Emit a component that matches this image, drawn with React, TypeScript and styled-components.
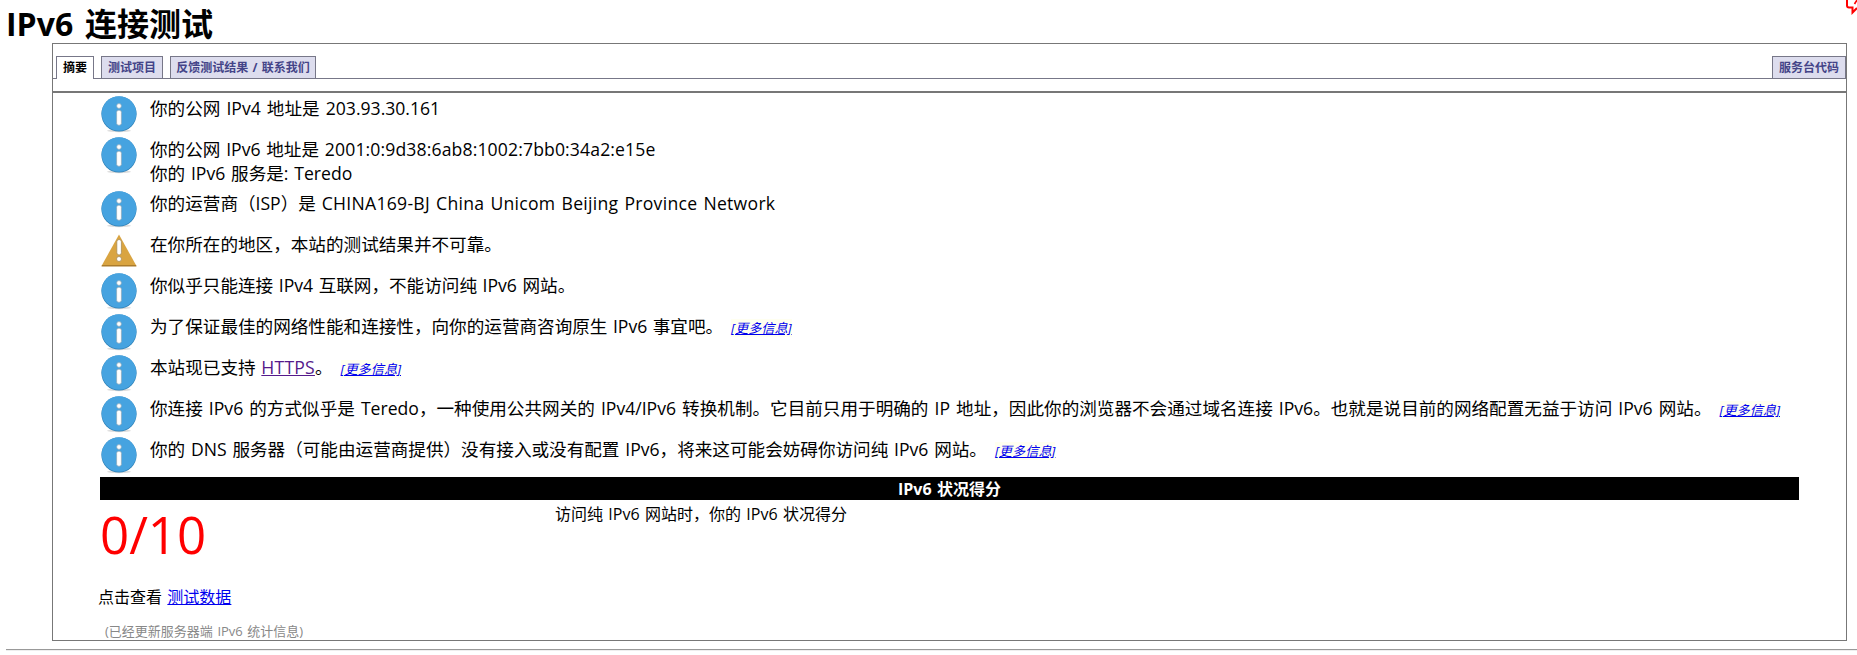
import React from 'react';
import styled, { createGlobalStyle } from 'styled-components';

const GlobalStyle = createGlobalStyle`
  *, *::before, *::after { box-sizing: border-box; }
  html, body { margin: 0; background: #fff; }
  body {
    height: 655px;
    overflow: hidden;
    color: #000;
    font-family: "Open Sans", "Noto Sans CJK SC", sans-serif;
    font-size: 16px;
    word-spacing: 1.2px;
  }
  a { color: #00e; text-decoration: underline; }
`;

const Page = styled.div`
  position: relative;
  height: 655px;
  padding-left: 6px;
`;

const Title = styled.h1`
  margin: 0;
  height: 43px;
  padding-top: 2px;
  font-size: 32px;
  line-height: 43px;
  font-weight: 700;
  word-spacing: 3.5px;
  white-space: nowrap;
`;

const Panel = styled.section`
  margin: 0 10px 0 46px;
  height: 598px;
  border: 1px solid #777;
`;

const TabBar = styled.nav`
  display: flex;
  align-items: flex-end;
  gap: 7px;
  height: 35px;
  padding-left: 3px;
  border-bottom: 1px solid #778;
`;

const Tab = styled.span<{ $active?: boolean; $right?: boolean; $w: number }>`
  display: flex;
  justify-content: center;
  width: ${p => p.$w}px;
  height: ${p => (p.$active ? 23 : 22)}px;
  margin-bottom: ${p => (p.$active ? -1 : 0)}px;
  margin-left: ${p => (p.$right ? 'auto' : 0)};
  border: 1px solid #778;
  border-bottom: 0;
  background: ${p => (p.$active ? '#fff' : '#dde')};
  color: ${p => (p.$active ? '#000' : '#448')};
  font-size: 12px;
  font-weight: 700;
  line-height: 22px;
  white-space: nowrap;
`;

const Content = styled.div`
  margin-top: 12px;
  padding: 3px 47px 0;
  border-top: 2px solid #777;
`;

const Row = styled.div<{ $tall?: boolean }>`
  display: flex;
  gap: 13px;
  height: ${p => (p.$tall ? 54 : 41)}px;
  padding-left: 1px;
  font-size: 17.6px;
  line-height: 24px;
  white-space: nowrap;

  > svg { flex: none; }
`;

const Text = styled.div<{ $ws?: number }>`
  word-spacing: ${p => p.$ws ?? 1.2}px;
`;

const Latin = styled.span<{ $ls: number }>`
  letter-spacing: ${p => p.$ls}px;
`;

const More = styled.a`
  margin-left: 8px;
  background: #fffff0;
  font-size: 13.2px;
  font-style: italic;
`;

const Visited = styled.a`
  && { color: #551a8b; }
  letter-spacing: 0.2px;
`;

const ScoreBar = styled.div`
  height: 23px;
  margin-top: -1px;
  background: #000;
  color: #fff;
  font-weight: 700;
  line-height: 24px;
  text-align: center;
`;

const ScoreRow = styled.div`
  display: flex;
  height: 82px;
`;

const Score = styled.div`
  width: 455px;
  color: #f00;
  font-size: 51px;
  line-height: 69px;
`;

const ScoreNote = styled.div`
  padding-top: 3px;
  line-height: 22px;
`;

const DataLine = styled.div`
  margin-left: -2px;
  height: 32px;
  line-height: 31px;
`;

const Footnote = styled.div`
  margin: 8px 0 0 5px;
  color: #888;
  font-size: 13px;
  line-height: 18px;
`;

const Rule = styled.hr`
  margin: 8px 0 0;
  border: 0;
  height: 2px;
  border-top: 1px solid #999;
  border-bottom: 1px solid #eee;
`;

const Corner = styled.svg`
  position: absolute;
  top: 0;
  right: 0;
`;

const InfoIcon = () => (
  <svg width="36" height="37" viewBox="0 0 36 37">
    <ellipse cx="18" cy="34.8" rx="12" ry="1.4" fill="#ddd" />
    <circle cx="18" cy="18" r="17.6" fill="#2d7fb5" />
    <circle cx="18" cy="17.5" r="17.3" fill="#46a3e0" />
    <circle cx="18" cy="10" r="2.4" fill="#fff" stroke="#8ba9bd" strokeWidth="0.8" />
    <rect x="15.6" y="14.2" width="4.8" height="15" rx="2" fill="#fff" stroke="#8ba9bd" strokeWidth="0.8" />
  </svg>
);

const WarnIcon = () => (
  <svg width="36" height="37" viewBox="0 0 36 37">
    <path d="M18 2.5 L35.5 34 H0.5 Z" fill="#d9a441" />
    <path d="M1 33 H35 L35.5 34.4 H0.5 Z" fill="#ab7c2c" />
    <rect x="15.8" y="7.5" width="4.6" height="15.5" rx="2.3" fill="#fff" stroke="#a98b55" strokeWidth="0.8" />
    <circle cx="18" cy="27" r="2.5" fill="#fff" stroke="#a98b55" strokeWidth="0.8" />
  </svg>
);

type Item = { warn?: boolean; tall?: boolean; more?: boolean; ws?: number; body: React.ReactNode };

const items: Item[] = [
  { body: '你的公网 IPv4 地址是 203.93.30.161', ws: 1.5 },
  {
    tall: true,
    body: (
      <>
        你的公网 IPv6 地址是 <Latin $ls={0.13}>2001:0:9d38:6ab8:1002:7bb0:34a2:e15e</Latin>
        <br />
        你的 IPv6 服务是: Teredo
      </>
    ),
  },
  { body: <>你的运营商（ISP）是 <Latin $ls={0.28}>CHINA169-BJ China Unicom Beijing Province Network</Latin></> },
  { warn: true, body: '在你所在的地区，本站的测试结果并不可靠。' },
  { body: '你似乎只能连接 IPv4 互联网，不能访问纯 IPv6 网站。', ws: 1 },
  { more: true, body: '为了保证最佳的网络性能和连接性，向你的运营商咨询原生 IPv6 事宜吧。', ws: 0.9 },
  { more: true, body: <>本站现已支持 <Visited>HTTPS</Visited>。</> },
  { more: true, ws: 1.5, body: '你连接 IPv6 的方式似乎是 Teredo，一种使用公共网关的 IPv4/IPv6 转换机制。它目前只用于明确的 IP 地址，因此你的浏览器不会通过域名连接 IPv6。也就是说目前的网络配置无益于访问 IPv6 网站。' },
  { more: true, body: '你的 DNS 服务器（可能由运营商提供）没有接入或没有配置 IPv6，将来这可能会妨碍你访问纯 IPv6 网站。' },
];

export default function App() {
  return (
    <Page>
      <GlobalStyle />
      <Title>IPv6 连接测试</Title>
      <Panel>
        <TabBar>
          <Tab $active $w={38}>摘要</Tab>
          <Tab $w={62}>测试项目</Tab>
          <Tab $w={146}>反馈测试结果 / 联系我们</Tab>
          <Tab $right $w={74}>服务台代码</Tab>
        </TabBar>
        <Content>
          {items.map((it, i) => (
            <Row key={i} $tall={it.tall}>
              {it.warn ? <WarnIcon /> : <InfoIcon />}
              <Text $ws={it.ws}>
                {it.body}
                {it.more && <More>[更多信息]</More>}
              </Text>
            </Row>
          ))}
          <ScoreBar>IPv6 状况得分</ScoreBar>
          <ScoreRow>
            <Score>0/10</Score>
            <ScoreNote>访问纯 IPv6 网站时，你的 IPv6 状况得分</ScoreNote>
          </ScoreRow>
          <DataLine>点击查看 <a>测试数据</a></DataLine>
          <Footnote>(已经更新服务器端 IPv6 统计信息)</Footnote>
        </Content>
      </Panel>
      <Rule />
      <Corner width="11" height="15" viewBox="0 0 11 15">
        <path d="M1 0 V5.5 Q1 7.5 3 7.5 H6.5 V12.5 L11 8" fill="none" stroke="#f00" strokeWidth="2" />
        <path d="M8.5 4 L11 0" stroke="#f00" strokeWidth="1.6" />
      </Corner>
    </Page>
  );
}
